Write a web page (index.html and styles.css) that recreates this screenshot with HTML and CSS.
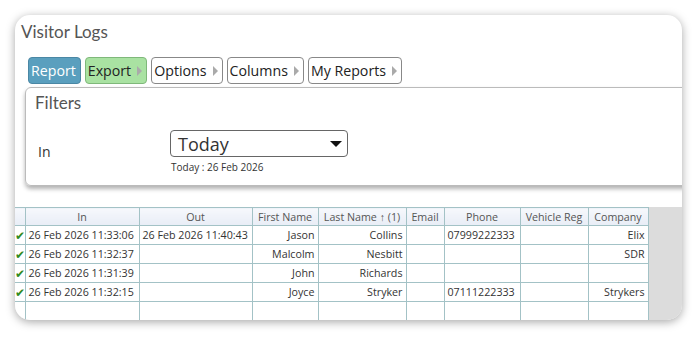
FILE: index.html
```html
<!DOCTYPE html>
<html lang="en">
<head>
    <meta charset="UTF-8">
    <title>Visitor Logs</title>
    <link rel="stylesheet" href="styles.css">
</head>
<body>
    <div class="window">
        <div class="top">
            <h1 class="title">Visitor Logs</h1>

            <div class="toolbar">
                <button class="tb-btn tb-report">Report</button>
                <button class="tb-btn tb-export">Export <span class="caret"></span></button>
                <button class="tb-btn">Options <span class="caret"></span></button>
                <button class="tb-btn">Columns <span class="caret"></span></button>
                <button class="tb-btn">My Reports <span class="caret"></span></button>
            </div>

            <div class="filters">
                <h2 class="filters-title">Filters</h2>
                <div class="filter-row">
                    <label class="filter-label">In</label>
                    <div class="filter-control">
                        <div class="select">
                            <span>Today</span>
                            <span class="select-arrow"></span>
                        </div>
                        <div class="hint">Today : 26 Feb 2026</div>
                    </div>
                </div>
            </div>
        </div>

        <div class="grid-area">
            <table class="grid">
                <colgroup>
                    <col style="width:10px">
                    <col style="width:114px">
                    <col style="width:113px">
                    <col style="width:66px">
                    <col style="width:88px">
                    <col style="width:38px">
                    <col style="width:76px">
                    <col style="width:68px">
                    <col style="width:60px">
                </colgroup>
                <thead>
                    <tr>
                        <th></th>
                        <th>In</th>
                        <th>Out</th>
                        <th>First Name</th>
                        <th>Last Name &#8593; (1)</th>
                        <th>Email</th>
                        <th>Phone</th>
                        <th>Vehicle Reg</th>
                        <th>Company</th>
                    </tr>
                </thead>
                <tbody>
                    <tr>
                        <td class="chk">&#10004;</td>
                        <td>26 Feb 2026 11:33:06</td>
                        <td>26 Feb 2026 11:40:43</td>
                        <td class="r">Jason</td>
                        <td class="r">Collins</td>
                        <td></td>
                        <td>07999222333</td>
                        <td></td>
                        <td class="r">Elix</td>
                    </tr>
                    <tr>
                        <td class="chk">&#10004;</td>
                        <td>26 Feb 2026 11:32:37</td>
                        <td></td>
                        <td class="r">Malcolm</td>
                        <td class="r">Nesbitt</td>
                        <td></td>
                        <td></td>
                        <td></td>
                        <td class="r">SDR</td>
                    </tr>
                    <tr>
                        <td class="chk">&#10004;</td>
                        <td>26 Feb 2026 11:31:39</td>
                        <td></td>
                        <td class="r">John</td>
                        <td class="r">Richards</td>
                        <td></td>
                        <td></td>
                        <td></td>
                        <td></td>
                    </tr>
                    <tr>
                        <td class="chk">&#10004;</td>
                        <td>26 Feb 2026 11:32:15</td>
                        <td></td>
                        <td class="r">Joyce</td>
                        <td class="r">Stryker</td>
                        <td></td>
                        <td>07111222333</td>
                        <td></td>
                        <td class="r">Strykers</td>
                    </tr>
                    <tr>
                        <td></td>
                        <td></td>
                        <td></td>
                        <td></td>
                        <td></td>
                        <td></td>
                        <td></td>
                        <td></td>
                        <td></td>
                    </tr>
                </tbody>
            </table>
        </div>
    </div>
</body>
</html>
```

FILE: styles.css
```css
* {
    margin: 0;
    padding: 0;
    box-sizing: border-box;
}

body {
    font-family: 'Open Sans', 'Noto Sans', sans-serif;
    background: #fff;
    padding: 15px;
    width: 697px;
    height: 337px;
    overflow: hidden;
}

.window {
    width: 667px;
    height: 305px;
    background: #fff;
    border-radius: 15px;
    overflow: hidden;
    box-shadow: 0 2px 10px rgba(0, 0, 0, 0.35);
    display: flex;
    flex-direction: column;
}

.top {
    height: 192px;
    flex: none;
}

.title {
    font-family: 'Lato', 'Open Sans', sans-serif;
    font-weight: 400;
    font-size: 17px;
    color: #555;
    padding: 6px 0 0 6px;
    height: 42px;
}

/* toolbar */
.toolbar {
    display: flex;
    gap: 4px;
    padding-left: 13px;
    height: 30px;
}

.tb-btn {
    font-family: 'Open Sans', sans-serif;
    font-size: 14.2px;
    color: #222;
    background: #fff;
    border: 1px solid #888;
    border-radius: 4px;
    height: 27px;
    padding: 0 4px 0 2px;
    display: flex;
    align-items: center;
    gap: 6px;
}

.tb-report {
    background: #5a9fbe;
    border-color: #4a87a4;
    color: #fff;
}

.tb-export {
    background: #a9e2a2;
    border-color: #7fb87a;
}

.caret {
    width: 0;
    height: 0;
    border-top: 5px solid transparent;
    border-bottom: 5px solid transparent;
    border-left: 5px solid #aaa;
}

/* filters */
.filters {
    margin-left: 10px;
    width: 700px;
    height: 99px;
    border: 1px solid #bbb;
    border-radius: 6px;
    box-shadow: 0 3px 4px rgba(0, 0, 0, 0.3);
    padding: 4px 0 0 9px;
}

.filters-title {
    font-family: 'Lato', 'Open Sans', sans-serif;
    font-weight: 400;
    font-size: 17px;
    color: #555;
    height: 38px;
}

.filter-row {
    display: flex;
}

.filter-label {
    width: 135px;
    padding: 12px 0 0 3px;
    font-size: 14px;
    color: #333;
}

.select {
    width: 178px;
    height: 27px;
    border: 1px solid #666;
    border-radius: 4px;
    display: flex;
    align-items: center;
    justify-content: space-between;
    padding: 0 5px 0 7px;
    font-size: 18px;
    color: #333;
}

.select-arrow {
    width: 0;
    height: 0;
    border-left: 6px solid transparent;
    border-right: 6px solid transparent;
    border-top: 6px solid #111;
}

.hint {
    font-size: 10px;
    color: #333;
    padding: 3px 0 0 1px;
}

/* grid */
.grid-area {
    flex: 1;
    background: #dcdcdc;
}

.grid {
    width: 633px;
    table-layout: fixed;
    border-collapse: collapse;
    background: #fff;
    font-size: 10.7px;
    color: #333;
}

.grid th,
.grid td {
    border: 1px solid #a3c2c6;
    height: 19px;
    padding: 0 3px;
    white-space: nowrap;
    overflow: hidden;
    font-weight: 400;
}

.grid th {
    height: 18px;
    color: #555;
    background: linear-gradient(#f6f8fc, #e8edf6);
    text-align: center;
}

.grid tr > :first-child {
    border-left: none;
}

.grid td.r {
    text-align: right;
}

.grid td.chk {
    padding: 0;
    color: #2f8a22;
    font-size: 12px;
    text-align: center;
}
```
